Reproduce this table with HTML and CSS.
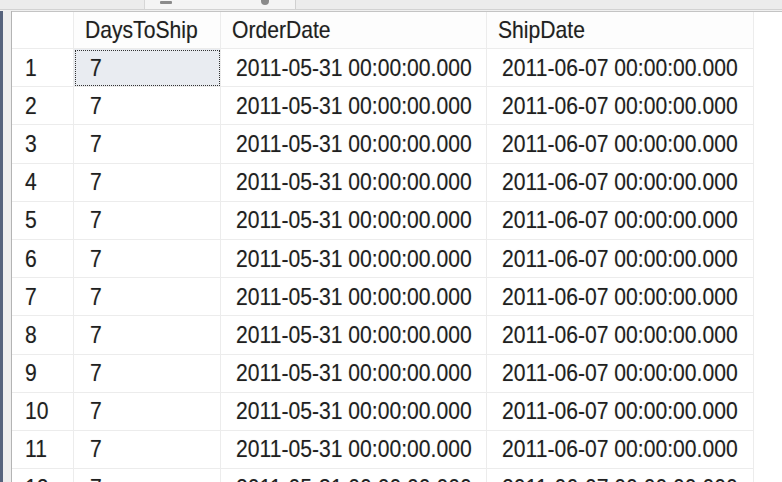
FILE: index.html
```html
<!DOCTYPE html>
<html>
<head>
<meta charset="utf-8">
<link rel="stylesheet" href="styles.css">
</head>
<body>
<div class="app">
  <div class="tabstrip">
    <div class="tab tab-messages"><span class="tab-icon"></span><span class="tab-glyph"></span></div>
  </div>
  <div class="frame">
    <div class="edge"><div class="edge-blue"></div></div>
    <div class="panel">
      <div class="grid" id="grid">
        <div class="hd corner"></div>
        <div class="hd"><span class="t">DaysToShip</span></div>
        <div class="hd"><span class="t">OrderDate</span></div>
        <div class="hd"><span class="t">ShipDate</span></div>
        <div class="hd filler"></div>
      </div>
    </div>
  </div>
</div>
<script src="app.js"></script>
</body>
</html>
```

FILE: app.js
```js
var g = document.getElementById('grid');
for (var i = 1; i <= 12; i++) {
  var html = '';
  html += '<div class="rn"><span class="t">' + i + '</span></div>';
  html += '<div class="c c-days' + (i === 1 ? ' sel' : '') + '"><span class="t">7</span></div>';
  html += '<div class="c c-date"><span class="t">2011-05-31 00:00:00.000</span></div>';
  html += '<div class="c c-date"><span class="t">2011-06-07 00:00:00.000</span></div>';
  html += '<div class="c filler"></div>';
  g.insertAdjacentHTML('beforeend', html);
}
```

FILE: styles.css
```css
html, body {
  margin: 0;
  padding: 0;
  background: #f0f0f0;
  overflow: hidden;
}
.app {
  width: 782px;
  height: 482px;
  display: flex;
  flex-direction: column;
  font-family: "Liberation Sans", Arial, sans-serif;
  color: #1f1f1f;
}
.tabstrip {
  height: 10px;
  flex: none;
  display: flex;
  background: #ececec;
  border-bottom: 1px solid #d2d2d2;
  box-sizing: border-box;
  padding-left: 144px;
}
.tab {
  height: 9px;
  box-sizing: border-box;
}
.tab-messages {
  width: 152px;
  background: #f4f4f4;
  border-left: 1px solid #d6d6d6;
  border-right: 1px solid #d0d0d0;
  position: relative;
}
.tab-icon {
  position: absolute;
  left: 15px;
  top: 1px;
  width: 12px;
  height: 3px;
  background: #8a8a8a;
  border-radius: 1px;
}
.tab-glyph {
  position: absolute;
  left: 116px;
  top: 0;
  width: 8px;
  height: 5px;
  background: #8a8a8a;
  border-radius: 0 0 4px 4px;
}
.frame {
  flex: 1;
  display: flex;
  min-height: 0;
  padding-top: 1px;
}
.edge {
  width: 12px;
  flex: none;
  background: #eeeeee;
  border-right: 1px solid #b4b4b4;
  box-sizing: border-box;
}
.edge-blue {
  width: 3px;
  height: 100%;
  background: #56637d;
}
.panel {
  flex: 1;
  background: #ffffff;
  border-top: 1px solid #c4c4c4;
  overflow: hidden;
}
.grid {
  display: grid;
  grid-template-columns: 62px 147px 266px 267px 1fr;
  grid-auto-rows: 38.2px;
  grid-template-rows: 37px;
}
.grid > div {
  box-sizing: border-box;
  border-right: 1px solid #ececec;
  border-bottom: 1px solid #ececec;
  display: flex;
  align-items: center;
  white-space: nowrap;
  overflow: visible;
  font-size: 24px;
}
.t {
  display: inline-block;
  transform: scaleX(0.88);
  transform-origin: left center;
  text-shadow: 0 0 1px rgba(0, 0, 0, 0.25);
}
.hd {
  background: #fdfdfd;
  padding-left: 11px;
}
.corner {
  background: #ffffff;
}
.rn {
  padding-left: 13px;
}
.c {
  padding-left: 15px;
}
.c-days {
  padding-left: 16px;
}
.grid > .filler {
  border-right: none;
  border-bottom: none;
  background: #ffffff;
}
.sel {
  background: #e9ecf1;
  outline: 1px dotted #333;
  outline-offset: -2px;
}
```
